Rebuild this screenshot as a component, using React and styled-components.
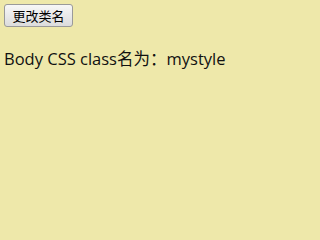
import React, { useState } from "react";
import styled, { createGlobalStyle } from "styled-components";

const Global = createGlobalStyle`
  html, body { margin: 0; padding: 0; }
  body {
    background: #eee8aa;
    padding: 4px;
    font-family: "Open Sans", "Noto Sans CJK SC", sans-serif;
    color: #111;
  }
`;

const Button = styled.button`
  display: block;
  height: 23px;
  width: 69px;
  padding: 0;
  font-family: "Noto Sans CJK SC", sans-serif;
  font-size: 13px;
  color: #000;
  background: linear-gradient(#f7f7f7, #dcdcdc);
  border: 1px solid #9a9a9a;
  border-radius: 3px;
`;

const Text = styled.p`
  margin: 20px 0 0;
  font-size: 16.5px;
  line-height: 23px;
`;

export default function App() {
  const [name] = useState("mystyle");
  return (
    <>
      <Global />
      <Button>更改类名</Button>
      <Text>Body CSS class名为：{name}</Text>
    </>
  );
}
